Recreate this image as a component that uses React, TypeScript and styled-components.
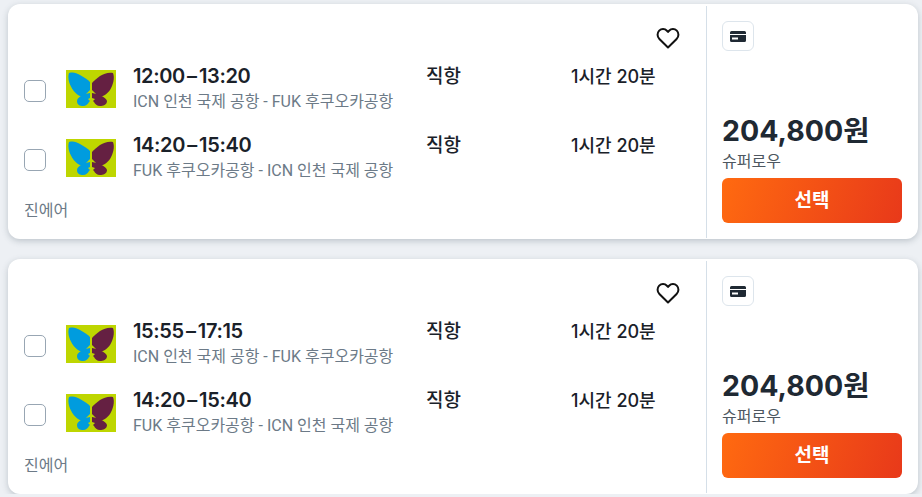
import { createGlobalStyle } from "styled-components";
import styled from "styled-components";

const FONT = `Inter, "Noto Sans CJK KR", sans-serif`;
const TEXT_FONT = `Roboto, "Noto Sans CJK KR", sans-serif`;

const GlobalStyle = createGlobalStyle`
  html, body {
    margin: 0;
    padding: 0;
    background: #edf0f4;
    overflow: hidden;
  }
  body {
    font-family: ${FONT};
    color: #1f2933;
  }
`;

const Page = styled.div`
  display: flex;
  flex-direction: column;
  gap: 20px;
  padding: 4px 4px 0 8px;
`;

const Card = styled.div`
  display: flex;
  height: 235px;
  background: #fff;
  border-radius: 12px;
  box-shadow: 0 2px 6px rgba(80, 95, 110, 0.3);
`;

const Main = styled.div`
  flex: 1;
  display: flex;
  flex-direction: column;
  padding: 23px 26px 0 16px;
  min-width: 0;
`;

const HeartRow = styled.div`
  display: flex;
  justify-content: flex-end;
  height: 22px;
`;

const Flights = styled.div`
  display: flex;
  flex-direction: column;
  margin-top: 17px;
`;

const FlightRow = styled.div`
  display: flex;
  height: 69px;
  align-items: flex-start;

  &:last-child {
    height: 66px;
  }
`;

const Check = styled.span`
  box-sizing: border-box;
  width: 22px;
  height: 22px;
  margin-top: 14px;
  border: 1px solid #98a6b3;
  border-radius: 5px;
  background: #fff;
  flex: none;
`;

const Logo = styled.svg`
  width: 50px;
  height: 38px;
  margin: 4px 0 0 20px;
  flex: none;
`;

const Times = styled.div`
  width: 293px;
  margin-left: 17px;
  flex: none;
`;

const Time = styled.div`
  margin-top: -2px;
  font-size: 20px;
  line-height: 24px;
  font-weight: 600;
  letter-spacing: -0.35px;
  word-spacing: -2.5px;
  color: #1a2129;
`;

const Route = styled.div`
  margin-top: 4px;
  font-family: ${TEXT_FONT};
  font-size: 16px;
  line-height: 20px;
  color: #6c7a87;
  white-space: nowrap;
`;

const Stops = styled.div`
  width: 145px;
  flex: none;
  margin-top: 1px;
  font-size: 19px;
  line-height: 20px;
  font-weight: 500;
  color: #1a2129;
`;

const Duration = styled(Stops)`
  width: auto;
  font-size: 18px;
`;

const Airline = styled.div`
  font-family: ${TEXT_FONT};
  font-size: 16px;
  line-height: 20px;
  color: #6c7a87;
`;

const Side = styled.div`
  width: 180px;
  flex: none;
  display: flex;
  flex-direction: column;
  margin: 2px 0 1px;
  padding: 15px 16px 15px 15px;
  border-left: 1px solid #d5dfe8;
`;

const IconTile = styled.div`
  box-sizing: border-box;
  width: 32px;
  height: 30px;
  display: flex;
  align-items: center;
  justify-content: center;
  border: 1px solid #dde5ec;
  border-radius: 6px;
`;

const Price = styled.div`
  margin-top: auto;
  margin-bottom: 3px;
  font-size: 28.5px;
  line-height: 36px;
  font-weight: 700;
  color: #1f2933;
  white-space: nowrap;
`;

const Fare = styled.div`
  font-size: 16px;
  line-height: 19px;
  color: #4d5760;
`;

const SelectButton = styled.button`
  height: 45px;
  margin-top: 7px;
  padding: 0 0 4px;
  border: 0;
  border-radius: 6px;
  background: linear-gradient(110deg, #ff6a10 0%, #e8391a 100%);
  color: #fff;
  font-family: ${FONT};
  font-size: 19px;
  font-weight: 700;
`;

function Heart() {
  return (
    <svg width="24" height="22" viewBox="0 0 24 22" fill="none">
      <path
        d="M12 20.500 3.400 12C1 9.600 1 5.900 3.200 3.600c2.200-2.200 5.600-2.100 7.700.1L12 4.900l1.100-1.200c2.100-2.200 5.500-2.300 7.700-.1 2.200 2.300 2.200 6-.2 8.400Z"
        stroke="#111"
        strokeWidth="2"
        strokeLinejoin="round"
      />
    </svg>
  );
}

function CardIcon() {
  return (
    <svg width="16" height="11" viewBox="0 0 16 11">
      <path
        fill="#1f2933"
        fillRule="evenodd"
        d="M1.500 0h13A1.500 1.500 0 0 1 16 1.500V3H0V1.500A1.500 1.500 0 0 1 1.500 0ZM0 4h16v5.500a1.500 1.500 0 0 1-1.500 1.500h-13A1.500 1.500 0 0 1 0 9.500ZM2 6.500V8.500h6V6.500Z"
      />
    </svg>
  );
}

function AirlineLogo() {
  return (
    <Logo viewBox="0 0 50 38">
      <rect width="50" height="38" fill="#bed600" />
      <path
        fill="#009cde"
        d="M3 3C8 2 10 3 14 5C18 7 22 10 24 12V20L17 27C14 27 10 24 7 20C4 16 1 8 3 3Z"
      />
      <path
        fill="#009cde"
        d="M24 23C18 24 11 27 11 31C11 35 14 36 17 36C20 36 22 34 23 32L24 31L22 29L24 28Z"
      />
      <path
        fill="#652042"
        d="M47 3C42 2 38 4 34 6C31 8 28 11 26 13V20L33 27C37 27 41 24 44 20C47 15 49 8 47 3Z"
      />
      <path
        fill="#652042"
        d="M26 23C32 24 40 27 41 31C41 35 37 36 34 36C31 36 29 34 28 32L27 31L29 29L26 28Z"
      />
    </Logo>
  );
}

type Flight = { time: string; route: string };

const OFFERS: Flight[][] = [
  [
    { time: "12:00 – 13:20", route: "ICN 인천 국제 공항 - FUK 후쿠오카공항" },
    { time: "14:20 – 15:40", route: "FUK 후쿠오카공항 - ICN 인천 국제 공항" },
  ],
  [
    { time: "15:55 – 17:15", route: "ICN 인천 국제 공항 - FUK 후쿠오카공항" },
    { time: "14:20 – 15:40", route: "FUK 후쿠오카공항 - ICN 인천 국제 공항" },
  ],
];

export default function App() {
  return (
    <Page>
      <GlobalStyle />
      {OFFERS.map((flights, i) => (
        <Card key={i}>
          <Main>
            <HeartRow>
              <Heart />
            </HeartRow>
            <Flights>
              {flights.map((flight, j) => (
                <FlightRow key={j}>
                  <Check />
                  <AirlineLogo />
                  <Times>
                    <Time>{flight.time}</Time>
                    <Route>{flight.route}</Route>
                  </Times>
                  <Stops>직항</Stops>
                  <Duration>1시간 20분</Duration>
                </FlightRow>
              ))}
            </Flights>
            <Airline>진에어</Airline>
          </Main>
          <Side>
            <IconTile>
              <CardIcon />
            </IconTile>
            <Price>204,800원</Price>
            <Fare>슈퍼로우</Fare>
            <SelectButton>선택</SelectButton>
          </Side>
        </Card>
      ))}
    </Page>
  );
}
